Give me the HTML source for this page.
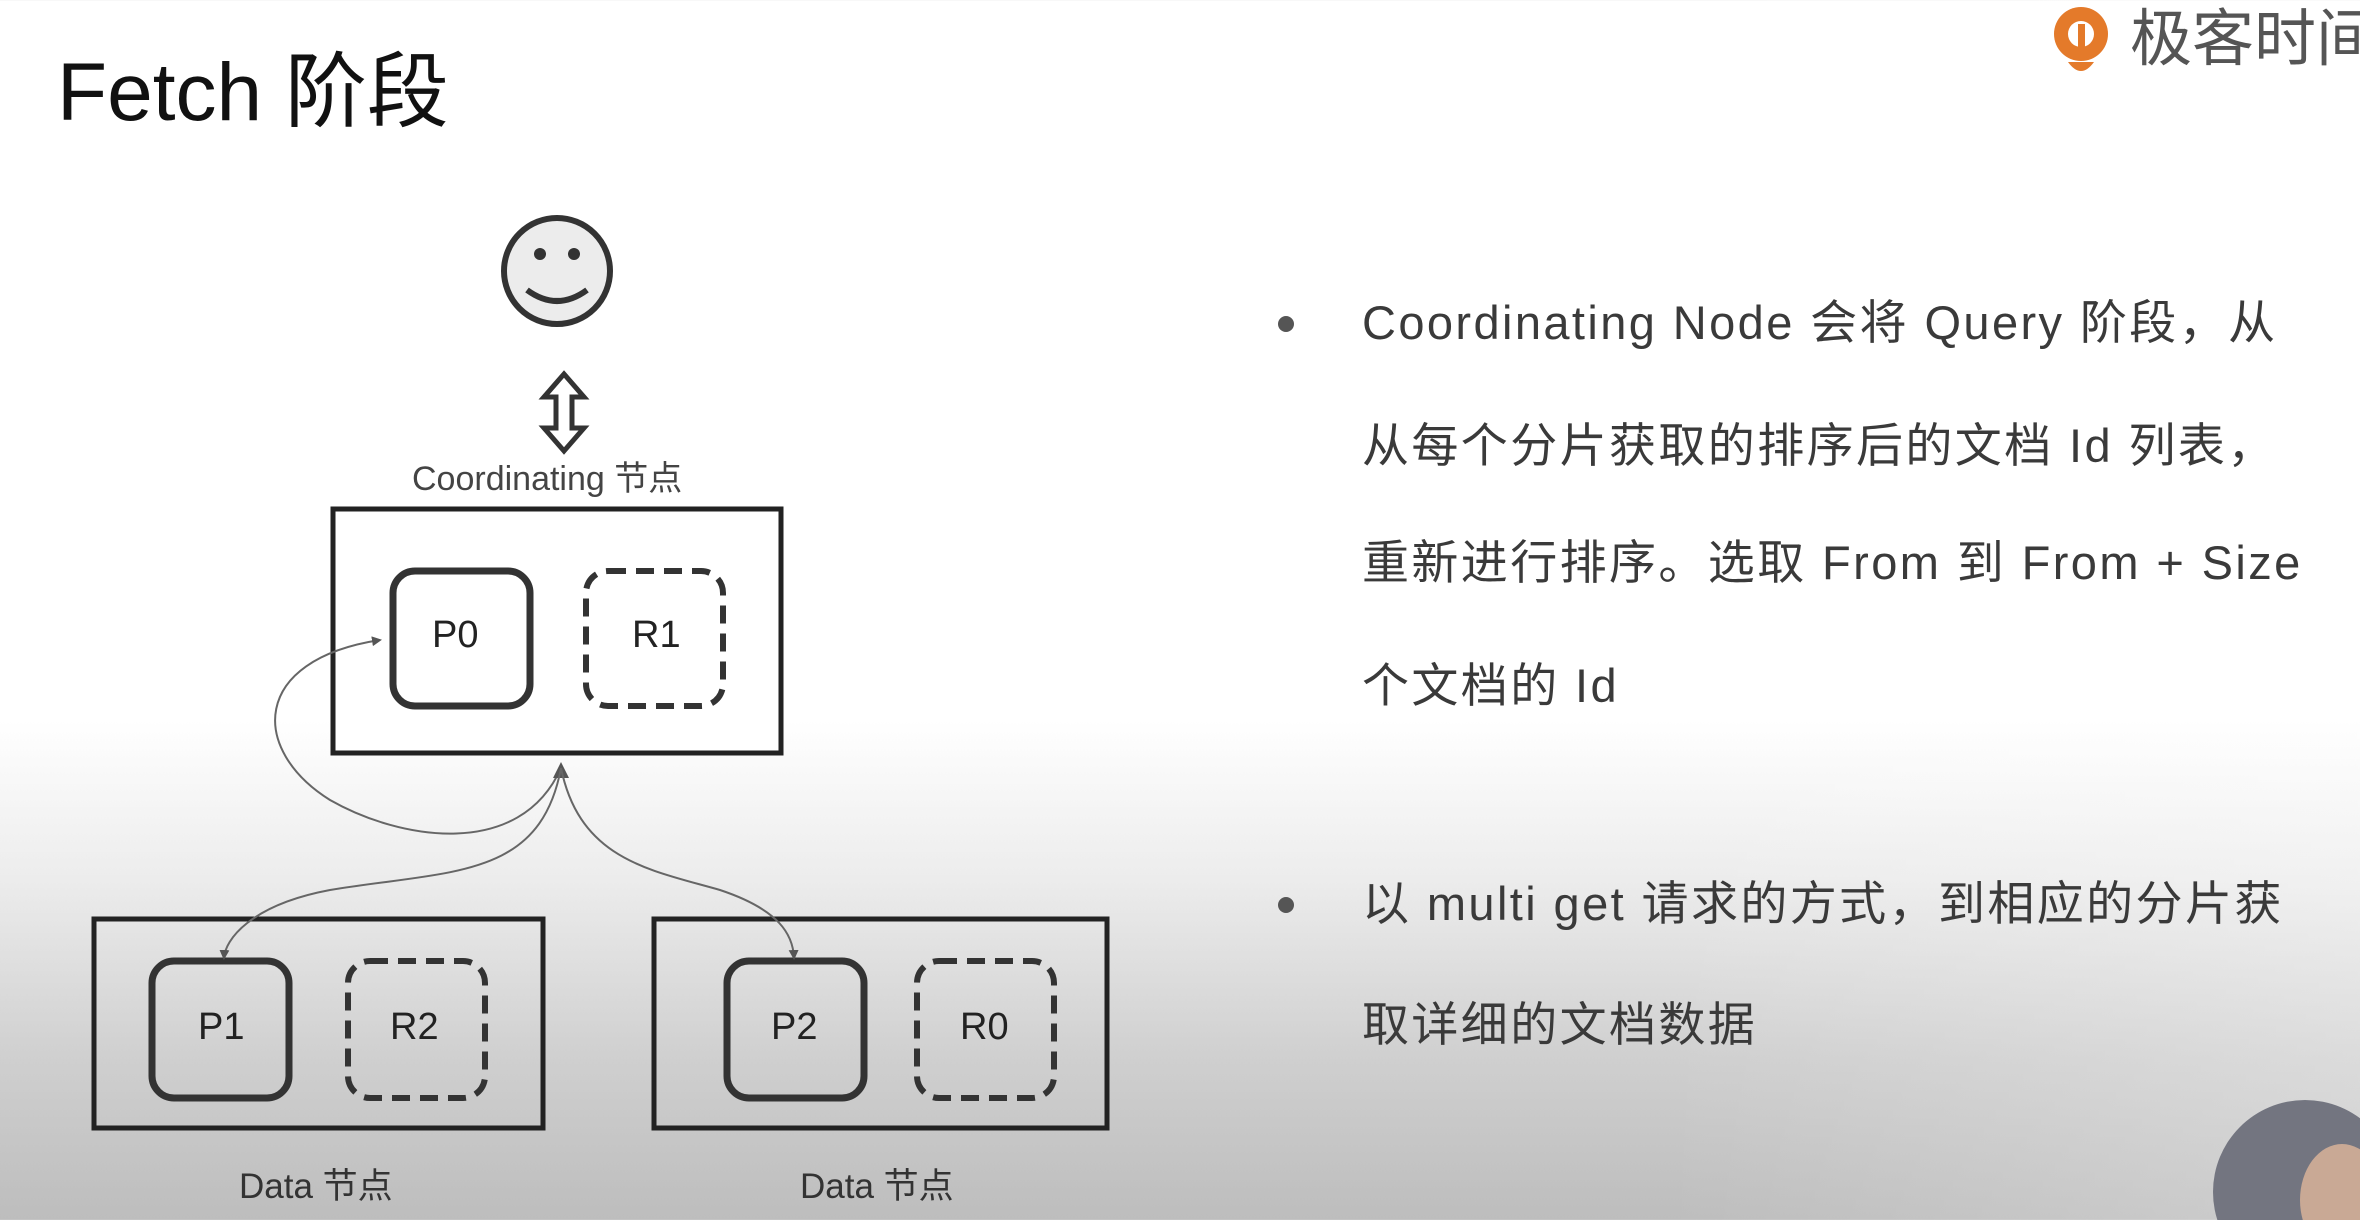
<!DOCTYPE html>
<html><head><meta charset="utf-8"><style>
html,body{margin:0;padding:0}
body{width:2360px;height:1220px;overflow:hidden;position:relative;
background:linear-gradient(180deg,#fff 0px,#fff 720px,#ececec 880px,#cfcfcf 1060px,#bdbdbd 1220px);
font-family:"Liberation Sans","Noto Sans CJK SC",sans-serif;}
.t{position:absolute;white-space:nowrap;line-height:1.15}
.r{position:absolute;left:1362px;font-size:47px;color:#3a3a3a;white-space:nowrap;letter-spacing:2.4px;line-height:1.15}
.dot{position:absolute;left:1278px;width:16px;height:16px;border-radius:50%;background:#555}
</style></head><body>
<div style="position:absolute;right:0;top:0;width:700px;height:1220px;background:linear-gradient(90deg,rgba(255,255,255,0),rgba(255,255,255,0.25))"></div>
<div class="t" style="left:57px;top:46px;font-size:82px;color:#111">Fetch 阶段</div>

<svg style="position:absolute;left:0;top:0" width="2360" height="1220" viewBox="0 0 2360 1220">
<defs><marker id="ah" markerWidth="10" markerHeight="10" refX="8" refY="5" orient="auto" markerUnits="userSpaceOnUse" viewBox="0 0 10 10"><path d="M0,0 L10,5 L0,10 z" fill="#555"/></marker></defs>
<circle cx="557" cy="271" r="53" fill="#ececec" stroke="#333" stroke-width="6"/>
<circle cx="540" cy="254" r="6" fill="#333"/><circle cx="574" cy="254" r="6" fill="#333"/>
<path d="M527,290 Q557,312 587,290" fill="none" stroke="#333" stroke-width="6"/>
<path d="M564,374 L584,397 L572,397 L572,428 L584,428 L564,451 L544,428 L556,428 L556,397 L544,397 Z" fill="#fff" stroke="#333" stroke-width="5"/>
<rect x="333" y="509" width="448" height="244" fill="#fff" stroke="#222" stroke-width="5"/>
<rect x="393" y="571" width="137" height="135" rx="22" fill="none" stroke="#333" stroke-width="7"/>
<rect x="586" y="571" width="137" height="135" rx="22" fill="none" stroke="#333" stroke-width="6" stroke-dasharray="18,10"/>
<rect x="94" y="919" width="449" height="209" fill="none" stroke="#222" stroke-width="5"/>
<rect x="152" y="961" width="137" height="137" rx="22" fill="none" stroke="#333" stroke-width="7"/>
<rect x="348" y="961" width="137" height="137" rx="22" fill="none" stroke="#333" stroke-width="6" stroke-dasharray="18,10"/>
<rect x="654" y="919" width="453" height="209" fill="none" stroke="#222" stroke-width="5"/>
<rect x="727" y="961" width="137" height="137" rx="22" fill="none" stroke="#333" stroke-width="7"/>
<rect x="917" y="961" width="137" height="137" rx="22" fill="none" stroke="#333" stroke-width="6" stroke-dasharray="18,10"/>
<path d="M561,768 C520,860 400,840 330,800 C250,750 250,660 380,640" fill="none" stroke="#666" stroke-width="2" marker-end="url(#ah)"/>
<path d="M561,762 L553,778 L569,778 Z" fill="#555"/>
<path d="M561,768 C540,880 450,870 330,890 C250,905 225,940 224,958" fill="none" stroke="#666" stroke-width="2" marker-end="url(#ah)"/>
<path d="M561,768 C580,860 650,870 720,890 C780,910 793,935 794,958" fill="none" stroke="#666" stroke-width="2" marker-end="url(#ah)"/>
<circle cx="2081" cy="34" r="27" fill="#e47a2a"/>
<circle cx="2081" cy="34" r="13" fill="#fff"/>
<path d="M2068,62 Q2081,80 2094,62 Z" fill="#e47a2a"/>
<path d="M2078,24 L2085,24 L2085,58 L2078,58 Z" fill="#e47a2a"/>
<circle cx="2305" cy="1192" r="92" fill="#737580"/>
<ellipse cx="2342" cy="1200" rx="42" ry="56" fill="#c9a995"/>
</svg>

<div class="t" style="left:412px;top:460px;font-size:34px;color:#444">Coordinating 节点</div>
<div class="t" style="left:432px;top:614px;font-size:38px;color:#222">P0</div>
<div class="t" style="left:632px;top:614px;font-size:38px;color:#222">R1</div>
<div class="t" style="left:198px;top:1006px;font-size:38px;color:#222">P1</div>
<div class="t" style="left:390px;top:1006px;font-size:38px;color:#222">R2</div>
<div class="t" style="left:771px;top:1006px;font-size:38px;color:#222">P2</div>
<div class="t" style="left:960px;top:1006px;font-size:38px;color:#222">R0</div>
<div class="t" style="left:239px;top:1167px;font-size:35px;color:#333">Data 节点</div>
<div class="t" style="left:800px;top:1167px;font-size:35px;color:#333">Data 节点</div>

<div class="t" style="left:2130px;top:4px;font-size:62px;color:#555">极客时间</div>

<div class="dot" style="top:316px"></div>
<div class="r" style="top:296px">Coordinating Node 会将 Query 阶段，从</div>
<div class="r" style="top:419px">从每个分片获取的排序后的文档 Id 列表，</div>
<div class="r" style="top:536px">重新进行排序。选取 From 到 From + Size</div>
<div class="r" style="top:659px">个文档的 Id</div>
<div class="dot" style="top:897px"></div>
<div class="r" style="top:877px">以 multi get 请求的方式，到相应的分片获</div>
<div class="r" style="top:998px">取详细的文档数据</div>
</body></html>
